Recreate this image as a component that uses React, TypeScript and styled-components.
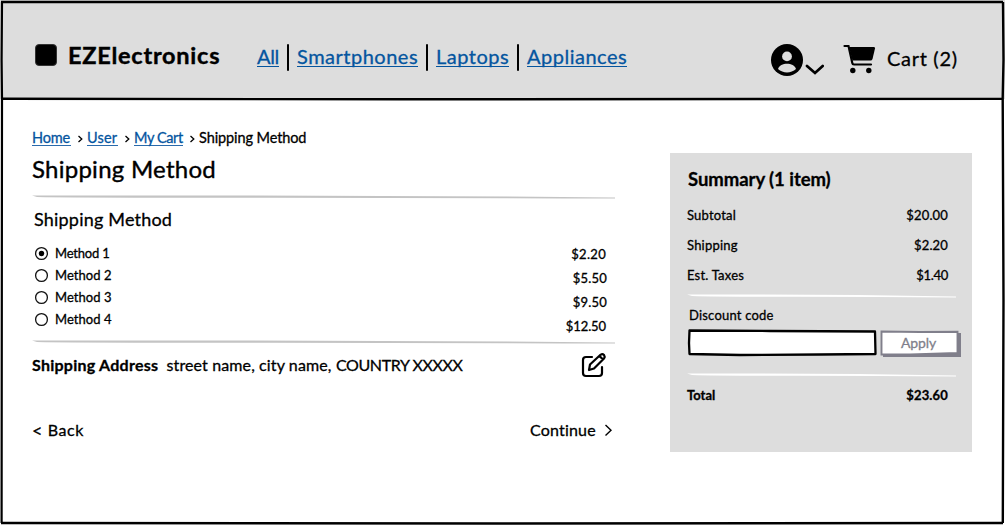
import React from "react";
import styled, { createGlobalStyle } from "styled-components";

const Global = createGlobalStyle`
  * { box-sizing: border-box; }
  body { margin: 0; background: #fff; color: #000; font-family: Lato, "Liberation Sans", sans-serif; }
`;

const Page = styled.div`
  position: relative;
  width: 1005px;
  height: 525px;
  overflow: hidden;
  background: #fff;
`;

const Frame = styled.svg`
  position: absolute;
  inset: 0;
  pointer-events: none;
`;

const Text = styled.span<{ $size: number; $track?: number; $bold?: boolean; $stroke?: number }>`
  display: block;
  white-space: pre;
  font-size: ${(p) => p.$size}px;
  line-height: 20px;
  font-weight: ${(p) => (p.$bold ? 700 : 400)};
  letter-spacing: ${(p) => p.$track ?? 0}px;
  -webkit-text-stroke: ${(p) => p.$stroke ?? 0.3}px currentColor;
`;

const Header = styled.header`
  display: flex;
  height: 99px;
  padding: 0 46px 0 35px;
  background: #ddd;
`;

const LogoMark = styled.div`
  width: 22px;
  height: 22px;
  margin: 44px 11px 0 0;
  border: 1px solid #333;
  border-radius: 4px;
  background: #000;
`;

const Brand = styled.div`
  width: 189px;
  padding-top: 45px;
`;

const Nav = styled.nav`
  display: flex;
  padding-top: 44px;
`;

const NavLink = styled.a<{ $w: number }>`
  width: ${(p) => p.$w}px;
  height: 23px;
  padding-top: 2px;
  border-bottom: 1px solid #04559f;
  color: #04559f;
`;

const Divider = styled.i`
  width: 2px;
  height: 27px;
  margin: 0 8px;
  border-radius: 1px;
  background: #000;
`;

const Account = styled.div`
  display: flex;
  margin-left: auto;
  padding-top: 42px;
`;

const CartIcon = styled.svg`
  margin: 0 9.5px 0 13.5px;
`;

const CartLabel = styled.div`
  width: 72px;
  padding-top: 6px;
`;

const Main = styled.main`
  display: flex;
  justify-content: space-between;
  padding: 29px 33px 0 32px;
`;

const Column = styled.section`
  width: 585px;
`;

const Crumbs = styled.div`
  display: flex;
  height: 20px;
`;

const Crumb = styled.a<{ $w: number }>`
  width: ${(p) => p.$w}px;
  height: 18px;
  border-bottom: 1px solid #2a6aab;
  color: #04559f;
`;

const CrumbArrow = styled.svg`
  width: 16px;
  height: 20px;
`;

const Title = styled.h1`
  margin: 11px 0 16px;
  height: 20px;
`;

const Subtitle = styled.h2`
  margin: 10px 0 13px 2px;
  height: 20px;
`;

const Rule = styled.svg`
  display: block;
`;

const Methods = styled.div`
  display: flex;
  justify-content: space-between;
  height: 98px;
  padding: 0 9px 0 2px;
`;

const Method = styled.label`
  display: flex;
  align-items: center;
  gap: 6px;
  height: 22px;
`;

const Price = styled.div<{ $shift?: number }>`
  display: flex;
  justify-content: flex-end;
  height: 24px;
  padding-top: 2px;
  margin-right: ${(p) => p.$shift ?? 0}px;
`;

const AddressRow = styled.div`
  display: flex;
  align-items: center;
  height: 28px;
  margin-top: 7px;
`;

const AddressLabel = styled.div`
  width: 134.5px;
`;

const AddressLine = styled.div`
  width: 169.5px;
`;

const EditIcon = styled.svg`
  margin: 0 9px 0 auto;
`;

const Actions = styled.div`
  display: flex;
  justify-content: space-between;
  margin-top: 41px;
  padding-right: 4px;
`;

const Action = styled.div<{ $w: number }>`
  display: flex;
  justify-content: space-between;
  width: ${(p) => p.$w}px;
`;

const Summary = styled.aside`
  width: 302px;
  height: 299px;
  margin-top: 25px;
  padding: 16px 11px 0 17px;
  background: #ddd;
`;

const Heading = styled.h3`
  height: 36px;
  margin: 0 0 0 1px;
`;

const Totals = styled.div`
  height: 89px;
`;

const Line = styled.div`
  display: flex;
  justify-content: space-between;
  height: 30px;
  padding-right: 13px;
`;

const Discount = styled.div`
  padding: 7px 0 0 2px;
  height: 30px;
`;

const Form = styled.div`
  display: flex;
  gap: 2px;
  height: 45px;
`;

const GrandTotal = styled.div`
  margin-top: 8px;
`;

const Sketch = styled.div<{ $w: number }>`
  position: relative;
  width: ${(p) => p.$w}px;
  height: 30px;
`;

const SketchLabel = styled.div`
  position: absolute;
  left: 22px;
  top: 5px;
  color: #807f8b;
`;

const Separator = ({ w, color }: { w: number; color: string }) => (
  <Rule width={w} height="4" viewBox={`0 0 ${w} 4`}>
    <path d={`M0 .6Q${w / 2} -.3 ${w} 2.4L${w} 3.5Q${w * 0.7} 3 ${w * 0.4} 2.7Q30 2.8 5 2Z`} fill={color} />
  </Rule>
);

const methods = ["Method 1", "Method 2", "Method 3", "Method 4"];
const prices = [
  { text: "$2.20", shift: 2, track: 0.3 },
  { text: "$5.50", shift: 1, track: 0.2 },
  { text: "$9.50", shift: 1, track: 0.2 },
  { text: "$12.50", shift: 2, track: -0.1 },
];
const totals = [
  { label: "Subtotal", value: "$20.00", track: 0.15 },
  { label: "Shipping", value: "$2.20", track: 0.15 },
  { label: "Est. Taxes", value: "$1.40", track: -0.3 },
];
const links = [
  { text: "All", w: 22, track: -0.3 },
  { text: "Smartphones", w: 121, track: 0.5 },
  { text: "Laptops", w: 73, track: 0.5 },
  { text: "Appliances", w: 100, track: 0.5 },
];
const crumbs = [
  { text: "Home", w: 39, track: -0.2 },
  { text: "User", w: 31, track: 0.2 },
  { text: "My Cart", w: 49, track: -0.4 },
];

export default function App() {
  return (
    <Page>
      <Global />
      <Header>
        <LogoMark />
        <Brand>
          <Text $size={23.5} $bold $track={0.75} $stroke={0.4}>EZElectronics</Text>
        </Brand>
        <Nav>
          {links.map((l, i) => (
            <React.Fragment key={l.text}>
              {i > 0 && <Divider />}
              <NavLink $w={l.w}>
                <Text $size={20} $track={l.track}>{l.text}</Text>
              </NavLink>
            </React.Fragment>
          ))}
        </Nav>
        <Account>
          <svg width="54" height="36" viewBox="770 42 54 36">
            <circle cx="787" cy="60" r="16" />
            <circle cx="787" cy="56.4" r="4.9" fill="#ddd" />
            <path d="M778 69C779 65.500 783 63.800 787 63.800S795 65.500 796 69C791 73.500 783 73.500 778 69Z" fill="#ddd" />
            <path d="M807 66L815 73L822.700 66" fill="none" stroke="#000" strokeWidth="2.700" strokeLinecap="round" />
          </svg>
          <CartIcon width="40" height="36" viewBox="838 42 40 36">
            <path d="M849 47H874Q875.300 47 875 48.500L872.500 59Q872 60.500 870.500 60.500H852.500Z" />
            <path d="M844.500 46H848.500L852.300 63Q852.500 64.500 854 64.500H871" fill="none" stroke="#000" strokeWidth="2.200" strokeLinecap="round" />
            <circle cx="852.800" cy="70.500" r="2.700" />
            <circle cx="868.800" cy="70.500" r="2.700" />
          </CartIcon>
          <CartLabel>
            <Text $size={20} $track={0.7}>Cart (2)</Text>
          </CartLabel>
        </Account>
      </Header>
      <Main>
        <Column>
          <Crumbs>
            {crumbs.map((c) => (
              <React.Fragment key={c.text}>
                <Crumb $w={c.w}>
                  <Text $size={14.5} $track={c.track}>{c.text}</Text>
                </Crumb>
                <CrumbArrow viewBox="0 0 16 20">
                  <path d="M7.500 8L10.800 11L7.500 14" fill="none" stroke="#000" strokeWidth="1.300" />
                </CrumbArrow>
              </React.Fragment>
            ))}
            <Text $size={14.5} $track={-0.1}>Shipping Method</Text>
          </Crumbs>
          <Title>
            <Text $size={24} $track={0.25} $stroke={0.4}>Shipping Method</Text>
          </Title>
          <Separator w={583} color="#c4c4c4" />
          <Subtitle>
            <Text $size={18} $track={0.2}>Shipping Method</Text>
          </Subtitle>
          <Methods>
            <div>
              {methods.map((m, i) => (
                <Method key={m}>
                  <svg width="15" height="15" viewBox="0 0 15 15">
                    <circle cx="7.500" cy="7.500" r="5.900" fill="#fff" stroke="#111" strokeWidth="1.300" />
                    {i === 0 && <circle cx="7.500" cy="7.500" r="2.700" />}
                  </svg>
                  <Text $size={13} $track={i === 0 ? -0.2 : 0.05}>{m}</Text>
                </Method>
              ))}
            </div>
            <div>
              {prices.map((p) => (
                <Price key={p.text} $shift={p.shift}>
                  <Text $size={13} $track={p.track}>{p.text}</Text>
                </Price>
              ))}
            </div>
          </Methods>
          <Separator w={583} color="#c4c4c4" />
          <AddressRow>
            <AddressLabel>
              <Text $size={16} $bold $track={0.25}>Shipping Address</Text>
            </AddressLabel>
            <AddressLine>
              <Text $size={16} $track={0.12}>street name, city name,</Text>
            </AddressLine>
            <Text $size={16} $track={-0.4}>COUNTRY XXXXX</Text>
            <EditIcon width="28" height="28" viewBox="580 351 28 28" fill="none" stroke="#000" strokeWidth="2.200" strokeLinecap="round" strokeLinejoin="round">
              <path d="M592 357H586Q583 357 583 360V373Q583 376 586 376H599Q602 376 602 373V367" />
              <path d="M589 370L590 364.500L600.500 354.800Q602.500 353.500 604 355Q605.300 356.800 604 358.500L594 368.500ZM599.500 356L603 359.500" />
            </EditIcon>
          </AddressRow>
          <Actions>
            <Action $w={52}>
              <Text $size={18}>{"<"}</Text>
              <Text $size={16} $track={0.6}>Back</Text>
            </Action>
            <Action $w={83}>
              <Text $size={16} $track={0.2}>Continue</Text>
              <svg width="9" height="20" viewBox="0 0 9 20">
                <path d="M1.500 5L7 10.300L1.500 15.500" fill="none" stroke="#000" strokeWidth="1.400" />
              </svg>
            </Action>
          </Actions>
        </Column>
        <Summary>
          <Heading><Text $size={18.5} $bold $track={-0.05}>Summary (1 item)</Text></Heading>
          <Totals>
            {totals.map((t) => (
              <Line key={t.label}>
                <Text $size={13} $track={0.2}>{t.label}</Text>
                <Text $size={13} $track={t.track}>{t.value}</Text>
              </Line>
            ))}
          </Totals>
          <Separator w={269} color="#fff" />
          <Discount>
            <Text $size={13} $track={0.2}>Discount code</Text>
          </Discount>
          <Form>
            <Sketch $w={190}>
              <svg width="190" height="30" viewBox="687 328 190 30">
                <path d="M689.500 330.500L770 331L875 331.500L875.500 354L820 354.500L740 355L689.500 354L689 343Z" fill="#fff" stroke="#000" strokeWidth="2.300" strokeLinejoin="round" />
              </svg>
            </Sketch>
            <Sketch $w={84}>
              <svg width="84" height="30" viewBox="879 328 84 30">
                <path d="M883 333H961V357H883Z" fill="#807f8b" />
                <path d="M881.500 331.500L920 332L957.500 331.700V353L910 354.500L881.500 354.500Z" fill="#fff" stroke="#807f8b" strokeWidth="1.900" />
              </svg>
              <SketchLabel><Text $size={14} $track={-0.1}>Apply</Text></SketchLabel>
            </Sketch>
          </Form>
          <Separator w={269} color="#fff" />
          <GrandTotal>
            <Line>
              <Text $size={13} $bold>Total</Text>
              <Text $size={13} $bold $track={0.15}>$23.60</Text>
            </Line>
          </GrandTotal>
        </Summary>
      </Main>
      <Frame width="1005" height="525" viewBox="0 0 1005 525" fill="none" stroke="#000">
        <path d="M1 2Q500 1 1003 2" strokeWidth="2.500" />
        <path d="M2 2L1.600 60L2 98L1.600 523" strokeWidth="2.200" />
        <path d="M1003 2L1003.500 60L1002.700 98L1003.500 300L1002.800 523" strokeWidth="2.400" />
        <path d="M1 98.700L400 99.300L1003 98.900" strokeWidth="2.400" />
        <path d="M1 523L500 523.500L1003 523" strokeWidth="2.400" />
      </Frame>
    </Page>
  );
}
